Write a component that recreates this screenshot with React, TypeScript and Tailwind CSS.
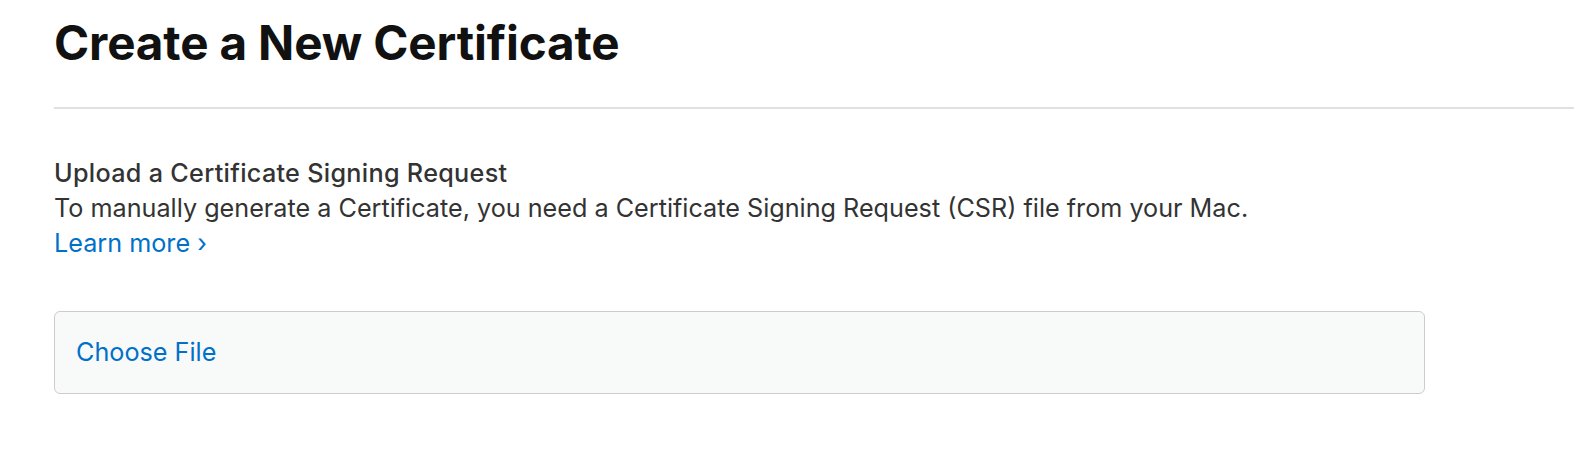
import React from "react";

export default function App() {
  return (
    <div
      className="w-[1574px] h-[458px] bg-white overflow-hidden pl-[54px]"
      style={{ fontFamily: "Inter, 'Noto Sans', sans-serif" }}
    >
      <h1 className="pt-[15px] text-[47.6px] leading-[56px] font-bold text-[#111111] tracking-[-0.003em]">
        Create a New Certificate
      </h1>
      <div className="mt-[36px] h-[2px] bg-[#e0e0e0]" />
      <div className="mt-[47px] text-[25.2px] leading-[35px] text-[#333333]">
        <div className="font-medium tracking-[0.012em]">Upload a Certificate Signing Request</div>
        <div>
          To manually generate a Certificate, you need a Certificate Signing Request (CSR) file from your Mac.
        </div>
        <a className="text-[#0070c9] inline-block">Learn more ›</a>
      </div>
      <div className="mt-[50px] w-[1371px] h-[83px] rounded-[6px] border-[1.5px] border-[#cccccc] bg-[#f8f9f9] flex items-center pl-[21px]">
        <span className="text-[25.2px] leading-[35px] text-[#0070c9]">Choose File</span>
      </div>
    </div>
  );
}
